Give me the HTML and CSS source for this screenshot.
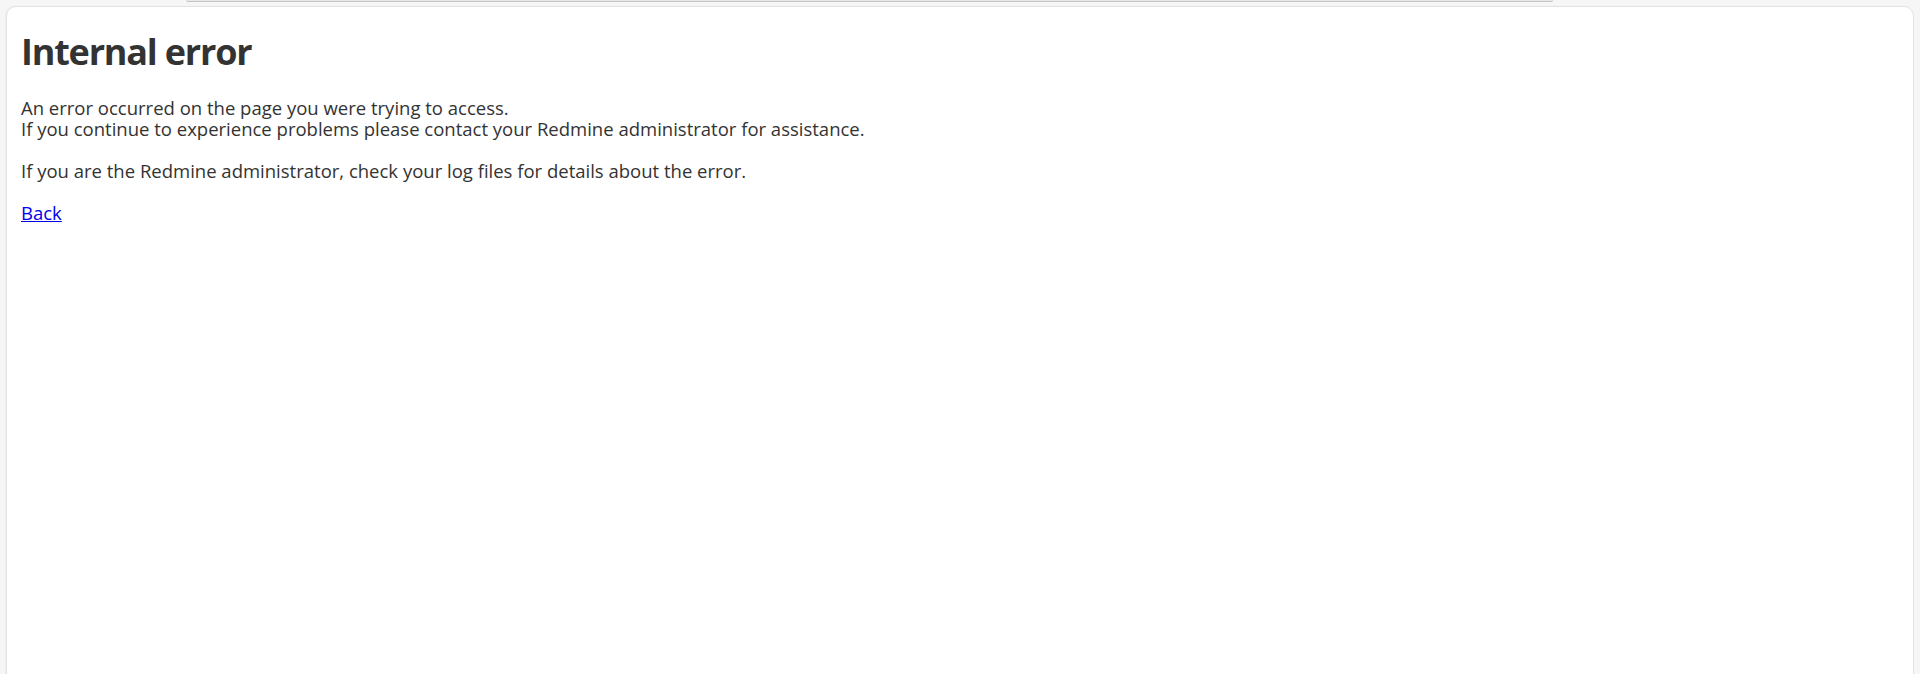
FILE: index.html
```html
<!DOCTYPE html>
<html lang="en">
<head>
    <meta charset="UTF-8">
    <meta name="viewport" content="width=device-width, initial-scale=1.0">
    <title>Internal error</title>
    <link rel="stylesheet" href="styles.css">
</head>
<body>
    <div class="top-bar"></div>
    <div class="content">
        <h2>Internal error</h2>
        <p>An error occurred on the page you were trying to access.<br>
        If you continue to experience problems please contact your Redmine administrator for assistance.</p>
        <p>If you are the Redmine administrator, check your log files for details about the error.</p>
        <p><a href="javascript:history.back()">Back</a></p>
    </div>
</body>
</html>
```

FILE: styles.css
```css
/* Reset */
* {
    margin: 0;
    padding: 0;
    box-sizing: border-box;
}

body {
    font-family: 'Open Sans', sans-serif;
    font-size: 18.5px;
    line-height: 21px;
    color: #333;
    background-color: #f6f6f6;
    overflow: hidden;
}

/* Bottom edge of the bar above the page */
.top-bar {
    width: 1367px;
    height: 2px;
    margin-left: 186px;
    background-color: #e8e8e8;
    border-bottom: 1px solid #c4c4c4;
    border-radius: 0 0 8px 8px;
}

/* Main content box */
.content {
    margin: 4px 6px 0;
    min-height: 700px;
    padding: 23px 14px;
    background-color: #fff;
    border: 1px solid #e2e2e2;
    border-radius: 10px;
    box-shadow: -1px 0 2px rgba(0, 0, 0, 0.04);
}

.content h2 {
    font-size: 36px;
    line-height: 1.2;
    font-weight: bold;
    letter-spacing: -1.2px;
    color: #333;
    margin-bottom: 24px;
}

.content p {
    margin-bottom: 21px;
}

.content a {
    color: #0000ee;
    text-decoration: underline;
}
```
